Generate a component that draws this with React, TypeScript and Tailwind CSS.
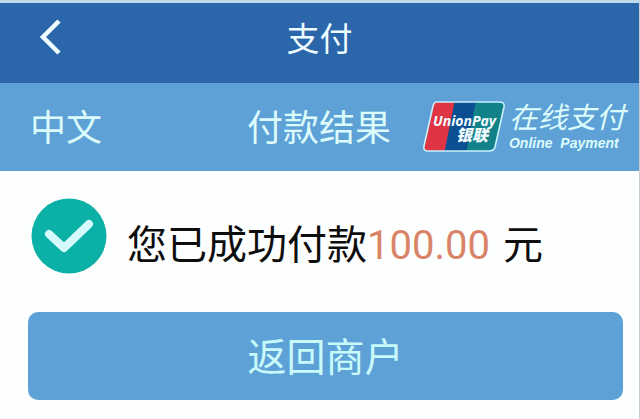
function UnionPayMark() {
  return (
    <svg viewBox="0 0 82 54" className="h-[54px] w-[82px] shrink-0" role="img" aria-label="UnionPay 银联">
      <defs>
        <clipPath id="card">
          <path d="M14 2H76Q82 2 81 7L72 47Q71 51 66 51H5Q0 51 1 46L10 6Q11 2 14 2Z" />
        </clipPath>
      </defs>
      <g clipPath="url(#card)">
        <rect width="82" height="54" fill="#11828a" />
        <path d="M0 0H53L43 54H0Z" fill="#0b4f93" />
        <path d="M0 0H32L21 54H0Z" fill="#df3444" />
      </g>
      <path
        d="M14 2H76Q82 2 81 7L72 47Q71 51 66 51H5Q0 51 1 46L10 6Q11 2 14 2Z"
        fill="none"
        stroke="#c9effb"
        strokeWidth="1.6"
      />
      <text
        x="10"
        y="26"
        fill="#f2fdff"
        fontSize="14"
        fontWeight="700"
        fontStyle="italic"
        fontFamily="'Open Sans', sans-serif"
      >
        UnionPay
      </text>
      <text
        x="33"
        y="41"
        fill="#f2fdff"
        fontSize="16"
        fontWeight="900"
        fontStyle="italic"
        fontFamily="'Noto Sans CJK SC', sans-serif"
      >
        银联
      </text>
    </svg>
  );
}

function TopBar() {
  return (
    <header className="grid h-20 grid-cols-[1fr_auto_1fr] items-center bg-[#2b66aa] px-9 pb-3 text-[#eefcff]">
      <button type="button" aria-label="返回" className="w-7">
        <svg viewBox="0 0 28 40" className="h-10 w-7" fill="none" stroke="currentColor" strokeWidth="4.500">
          <path d="M23 4L7 20L23 36" />
        </svg>
      </button>
      <h1 className="text-[33px] leading-10">支付</h1>
    </header>
  );
}

function ResultBar() {
  return (
    <div className="flex h-[88px] items-center justify-between bg-[#5da1d7] pr-3.5 pl-[30px] text-[#dcfbfb]">
      <button type="button" className="pb-1 text-4xl">
        中文
      </button>
      <div className="flex items-center gap-8">
        <h2 className="pb-1 text-4xl">付款结果</h2>
        <div className="flex items-center gap-1">
          <UnionPayMark />
          <div className="flex flex-col gap-1">
            <span className="text-[29px] leading-7 italic">在线支付</span>
            <span className="font-['Liberation_Sans',sans-serif] text-sm leading-5 font-bold whitespace-pre italic">
              Online  Payment
            </span>
          </div>
        </div>
      </div>
    </div>
  );
}

function SuccessIcon() {
  return (
    <svg viewBox="0 0 76 76" className="size-[76px] shrink-0" aria-hidden="true">
      <circle cx="38" cy="38" r="37.500" fill="#0bb0a7" />
      <path
        d="M18 36L33 50L58 26"
        fill="none"
        stroke="#d5fbff"
        strokeWidth="8"
        strokeLinecap="round"
        strokeLinejoin="round"
      />
    </svg>
  );
}

export default function App() {
  return (
    <div className="min-h-screen border-t-[3px] border-r border-t-[#bedbec] border-r-[#c5ccd4] bg-[#fdfefe] font-['Noto_Sans_CJK_SC',sans-serif]">
      <TopBar />
      <ResultBar />
      <main className="pr-4 pl-7">
        <div className="flex items-center gap-5 pt-[27px] pl-[3px]">
          <SuccessIcon />
          <p className="pt-4 text-[40px] leading-12 whitespace-nowrap text-[#0d0d0d]">
            您已成功付款
            <span className="mr-1 font-['Roboto',sans-serif] text-[#d98468]">100.00</span> 元
          </p>
        </div>
        <button
          type="button"
          className="mt-[38px] h-[88px] w-full rounded-[10px] bg-[#5da1d7] pb-1 text-[39px] text-[#c9fafa]"
        >
          返回商户
        </button>
      </main>
    </div>
  );
}
